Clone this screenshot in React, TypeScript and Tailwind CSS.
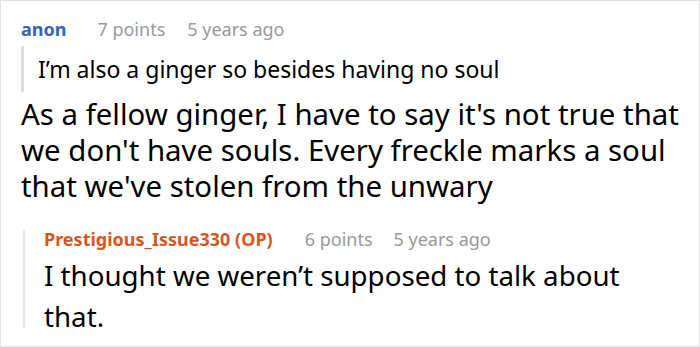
export default function App() {
  return (
    <div
      className="w-[700px] h-[347px] border border-[#e2e2e2] bg-white overflow-hidden"
      style={{ fontFamily: '"Noto Sans", "Open Sans", sans-serif' }}
    >
      <div className="pl-[20px] pt-[13px]">
        <div className="flex items-baseline text-[18px] leading-[30px]">
          <span className="font-bold text-[#3366bb]">anon</span>
          <span className="ml-[31px] text-[#999999]">7 points</span>
          <span className="ml-[22px] text-[#999999]">5 years ago</span>
        </div>
        <div className="mt-[2px] border-l-[3px] border-[#dddddd] pl-[14px] h-[46px] flex items-center">
          <span className="text-[23px] text-black leading-[30px]">
            I’m also a ginger so besides having no soul
          </span>
        </div>
        <p className="mt-[4px] text-[29.4px] leading-[36px] text-black pr-[2px]">
          As a fellow ginger, I have to say it's not true that we don't have souls. Every freckle marks a soul that we've stolen from the unwary
        </p>
        <div className="mt-[26px] ml-[2px] h-[98px] border-l-[2px] border-[#e8e8e8] pl-[19px]">
          <div className="flex items-baseline text-[18px] leading-[18px]">
            <span className="font-bold text-[#d6561f]">Prestigious_Issue330 (OP)</span>
            <span className="ml-[32px] text-[#999999]">6 points</span>
            <span className="ml-[21px] text-[#999999]">5 years ago</span>
          </div>
          <p className="mt-[7px] text-[27.7px] leading-[41px] text-black pr-[60px]">
            I thought we weren’t supposed to talk about that.
          </p>
        </div>
      </div>
    </div>
  );
}
